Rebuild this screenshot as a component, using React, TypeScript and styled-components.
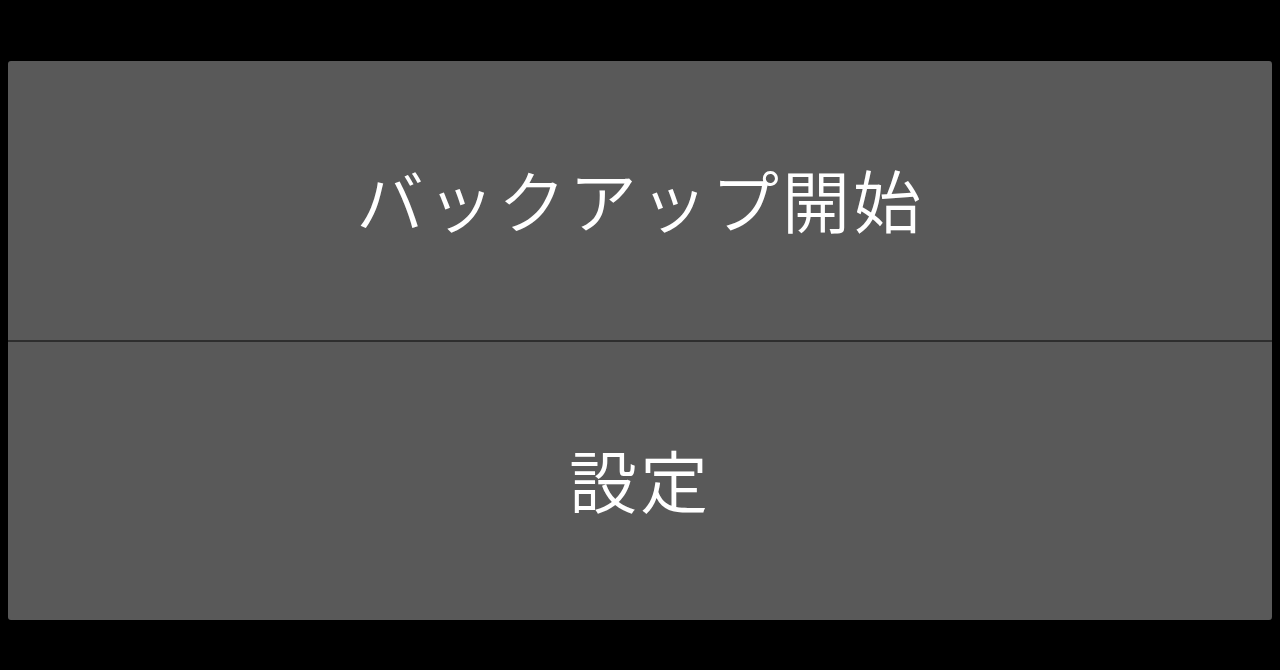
import styled, { createGlobalStyle } from "styled-components";

const GlobalStyle = createGlobalStyle`
  html, body {
    margin: 0;
    padding: 0;
    background: #000;
  }
`;

const Screen = styled.div`
  width: 1280px;
  height: 670px;
  background: #000;
  box-sizing: border-box;
  padding: 61px 8px 50px;
  display: flex;
  flex-direction: column;
`;

const Menu = styled.div`
  flex: 1;
  display: flex;
  flex-direction: column;
  border-radius: 3px;
  overflow: hidden;
`;

const MenuButton = styled.button`
  flex: 1;
  margin: 0;
  padding: 0 0 4px;
  border: none;
  background: #595959;
  color: #fff;
  font-family: "Noto Sans CJK JP", "Noto Sans", sans-serif;
  font-size: 68px;
  font-weight: 350;
  letter-spacing: 3px;
  display: flex;
  align-items: center;
  justify-content: center;
  cursor: pointer;

  & + & {
    border-top: 2px solid #2e2e2e;
  }
`;

const App = () => {
  return (
    <>
      <GlobalStyle />
      <Screen>
        <Menu>
          <MenuButton>バックアップ開始</MenuButton>
          <MenuButton>設定</MenuButton>
        </Menu>
      </Screen>
    </>
  );
};

export default App;
